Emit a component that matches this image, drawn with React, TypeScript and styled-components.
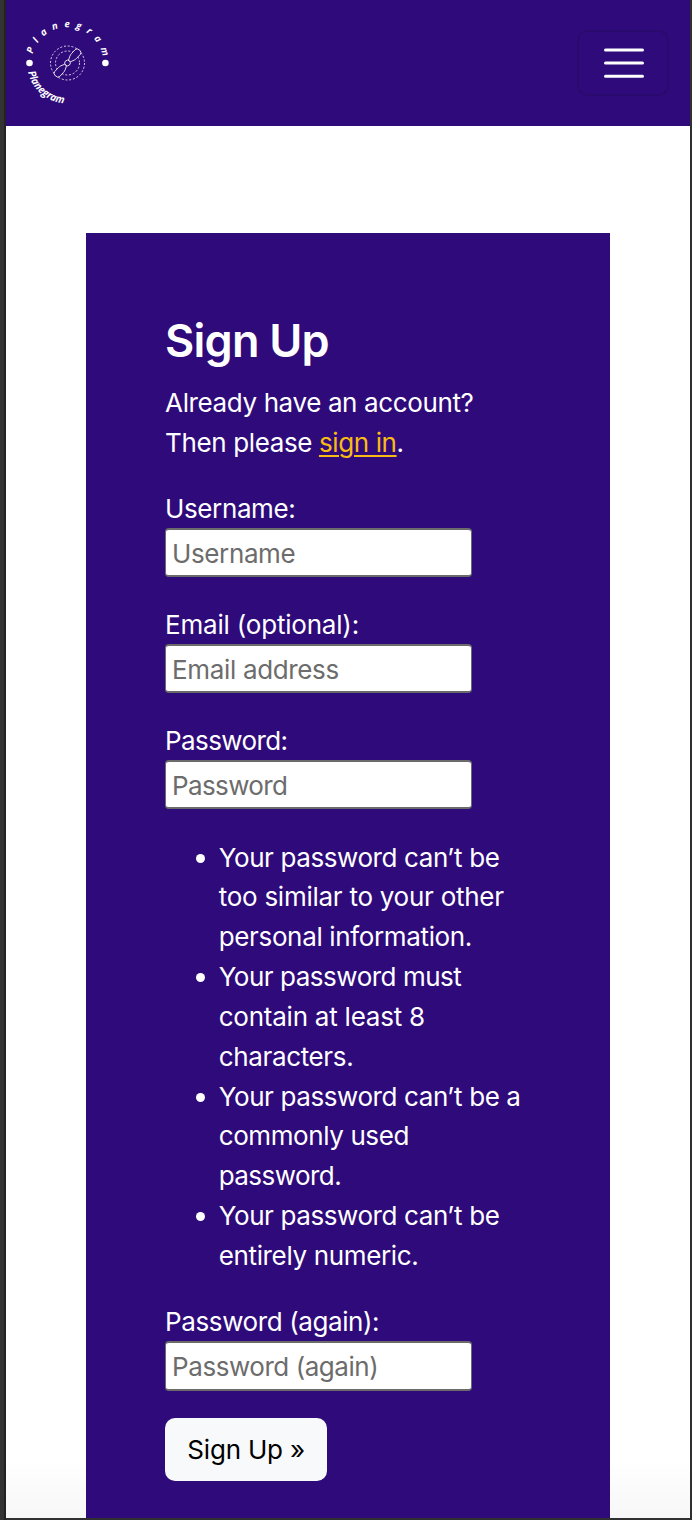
import React from "react";
import styled, { createGlobalStyle } from "styled-components";

const GlobalStyle = createGlobalStyle`
  *, *::before, *::after { box-sizing: border-box; }
  body {
    margin: 0;
    background: #fff;
    color: #fff;
    font-family: Inter, "Liberation Sans", sans-serif;
    font-size: 26px;
    font-weight: 430;
    line-height: 39.83px;
  }
`;

const Frame = styled.div`
  height: 1520px;
  overflow: hidden;
  padding: 0 2px 2px 6px;
  background: linear-gradient(to right, #333 4px, #222 4px, #222 6px, #303030 6px);
`;

const Page = styled.div`
  height: 1518px;
  overflow: hidden;
  background: linear-gradient(#fff 1460px, #f7f7f7 1518px);
`;

const Navbar = styled.header`
  height: 126px;
  display: flex;
  align-items: center;
  justify-content: space-between;
  padding: 0 21px 0 17px;
  background: #2f0a7a;
`;

const LogoArt = styled.svg`
  display: block;
  width: 90px;
  height: 90px;
  font-family: "Open Sans", "Liberation Sans", sans-serif;
  font-weight: 700;
  fill: #fff;
`;

const Toggler = styled.button`
  width: 92px;
  height: 66px;
  padding: 0 0 0 1px;
  display: flex;
  align-items: center;
  justify-content: center;
  background: none;
  border: 2px solid #2b0a6d;
  border-radius: 10px;
`;

const Card = styled.main`
  width: 524.5px;
  height: 1320px;
  margin: 106.5px 0 0 79.6px;
  padding: 80px 79.5px;
  background: #2f0a7a;
`;

const Title = styled.h1`
  margin: 0 0 14.5px;
  font-size: 45px;
  font-weight: 560;
  line-height: 56px;
  letter-spacing: -0.8px;
`;

const Intro = styled.p`
  margin: 0 0 26px;
  letter-spacing: -0.38px;
`;

const Link = styled.a`
  color: #f8ba14;
  text-decoration: underline;
  text-decoration-thickness: 2px;
  text-underline-offset: 3px;
`;

const Field = styled.div`
  height: 89.5px;
  margin-bottom: 26.5px;
`;

const Label = styled.label<{ $tracking: number }>`
  display: block;
  letter-spacing: ${(p) => p.$tracking}px;
`;

const Input = styled.input<{ $tracking: number }>`
  display: block;
  width: 307px;
  height: 49.6px;
  margin-top: -0.6px;
  padding: 2px 6px 0;
  border: 2px solid #6b6b6b;
  border-left-width: 1px;
  border-right-width: 1px;
  border-radius: 4px;
  background: #fff;
  font: inherit;
  letter-spacing: ${(p) => p.$tracking}px;
  &::placeholder { color: #6c6c6c; opacity: 1; }
`;

const Rules = styled.ul`
  margin: 0 0 26px;
  padding: 1px 0 0 53.6px;
  list-style: none;
`;

const Rule = styled.li`
  position: relative;
  white-space: nowrap;
  &::before {
    content: "";
    position: absolute;
    left: -23px;
    top: 16px;
    width: 9px;
    height: 9px;
    border-radius: 50%;
    background: #fff;
  }
`;

const RuleLine = styled.span<{ $tracking: number }>`
  display: block;
  letter-spacing: ${(p) => p.$tracking}px;
`;

const Submit = styled.button`
  display: block;
  width: 162px;
  height: 63px;
  padding: 1px 0 0 0;
  border: 0;
  border-radius: 10px;
  background: #f8f9fa;
  color: #000;
  font: inherit;
  letter-spacing: -0.2px;
`;

const Logo = () => (
  <LogoArt viewBox="0 0 90 90" role="img" aria-label="Planegram">
    <defs>
      <path id="upperArc" d="M8.6 45 A35.9 35.9 0 0 1 80.4 45" />
      <path id="lowerArc" d="M4 45 A40.5 40.5 0 0 0 85 45" />
    </defs>
    <text fontSize="9.5" fontStyle="italic">
      <textPath href="#upperArc" startOffset="9" textLength="97">Planegram</textPath>
    </text>
    <text fontSize="10.5" fontStyle="italic">
      <textPath href="#lowerArc" startOffset="9" textLength="51" lengthAdjust="spacingAndGlyphs">Planegram</textPath>
    </text>
    <circle cx="6.5" cy="45" r="3.3" />
    <circle cx="82.4" cy="45" r="3.3" />
    <g fill="none" stroke="#fff" strokeWidth="0.8">
      <circle cx="44.5" cy="45" r="17" strokeDasharray="2 1.8" />
      <circle cx="44.5" cy="45" r="12" strokeDasharray="2 1.8" />
      <g transform="rotate(43 44.5 45)" fill="#2f0a7a">
        <path d="M43.3 42.2 L41.6 38.5 Q41 37 41 35.5 V30 Q41.2 27.3 44.5 27.3 T48 30 V35.5 Q48 37 47.4 38.5 L45.7 42.2 Z" />
        <path d="M43.3 47.8 L41.6 51.5 Q41 53 41 54.5 V60 Q41.2 62.7 44.5 62.7 T48 60 V54.5 Q48 53 47.4 51.5 L45.7 47.8 Z" />
        <circle cx="44.5" cy="45" r="2.8" />
      </g>
    </g>
  </LogoArt>
);

type TextFieldProps = {
  id: string;
  label: string;
  placeholder: string;
  type?: string;
  tracking?: number;
  hintTracking?: number;
};

const TextField = ({ id, label, placeholder, type = "text", tracking = -0.4, hintTracking = -0.4 }: TextFieldProps) => (
  <Field>
    <Label htmlFor={id} $tracking={tracking}>{label}</Label>
    <Input id={id} type={type} placeholder={placeholder} $tracking={hintTracking} />
  </Field>
);

const rules: { text: string; tracking: number }[][] = [
  [
    { text: "Your password can’t be", tracking: -0.4 },
    { text: "too similar to your other", tracking: -0.26 },
    { text: "personal information.", tracking: -0.35 },
  ],
  [
    { text: "Your password must", tracking: -0.48 },
    { text: "contain at least 8", tracking: -0.23 },
    { text: "characters.", tracking: -0.35 },
  ],
  [
    { text: "Your password can’t be a", tracking: -0.4 },
    { text: "commonly used", tracking: -0.4 },
    { text: "password.", tracking: -0.55 },
  ],
  [
    { text: "Your password can’t be", tracking: -0.4 },
    { text: "entirely numeric.", tracking: -0.35 },
  ],
];

export default function App() {
  return (
    <Frame>
      <GlobalStyle />
      <Page>
        <Navbar>
          <Logo />
          <Toggler aria-label="Toggle navigation">
            <svg width="42" height="32" viewBox="0 0 42 32" stroke="#fff" strokeWidth="3" strokeLinecap="round">
              <path d="M2.5 3H39.5M2.5 16H39.5M2.5 29.2H39.5" />
            </svg>
          </Toggler>
        </Navbar>
        <Card>
          <Title>Sign Up</Title>
          <Intro>
            Already have an account?
            <br />
            Then please <Link href="#">sign in</Link>.
          </Intro>
          <TextField id="username" label="Username:" placeholder="Username" />
          <TextField
            id="email"
            label="Email (optional):"
            placeholder="Email address"
            type="email"
            tracking={-0.2}
            hintTracking={-0.35}
          />
          <TextField
            id="password"
            label="Password:"
            placeholder="Password"
            type="password"
            tracking={-0.6}
            hintTracking={-0.65}
          />
          <Rules>
            {rules.map((lines, i) => (
              <Rule key={i}>
                {lines.map((line) => (
                  <RuleLine key={line.text} $tracking={line.tracking}>{line.text}</RuleLine>
                ))}
              </Rule>
            ))}
          </Rules>
          <TextField
            id="again"
            label="Password (again):"
            placeholder="Password (again)"
            type="password"
            hintTracking={-0.45}
          />
          <Submit>Sign Up »</Submit>
        </Card>
      </Page>
    </Frame>
  );
}
